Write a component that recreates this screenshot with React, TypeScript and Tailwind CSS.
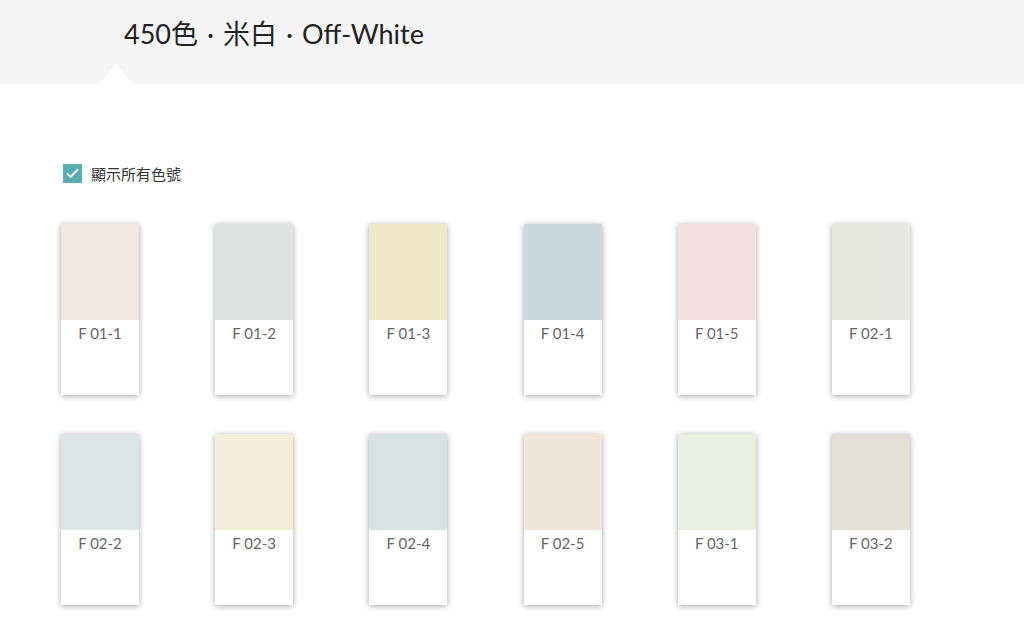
const swatches = [
  { code: "F 01-1", color: "bg-[#f2e7e5]" },
  { code: "F 01-2", color: "bg-[#e1e3e2]" },
  { code: "F 01-3", color: "bg-[#f1e8c9]" },
  { code: "F 01-4", color: "bg-[#cadadb]" },
  { code: "F 01-5", color: "bg-[#f2e0e3]" },
  { code: "F 02-1", color: "bg-[#e8e9e3]" },
  { code: "F 02-2", color: "bg-[#dde6e4]" },
  { code: "F 02-3", color: "bg-[#f1efdb]" },
  { code: "F 02-4", color: "bg-[#d6e3e1]" },
  { code: "F 02-5", color: "bg-[#f1e6dc]" },
  { code: "F 03-1", color: "bg-[#ebefe2]" },
  { code: "F 03-2", color: "bg-[#e2dfd6]" },
]

function Swatch({ code, color }: { code: string; color: string }) {
  return (
    <div className="w-[78px] h-[171px] bg-white shadow-[0_1px_6px_rgba(0,0,0,0.35)] flex flex-col">
      <div className={`h-[96px] ${color}`} />
      <p className="mt-[4px] text-center text-[15px] leading-[18px] text-[#666] font-['Lato',sans-serif]">
        {code}
      </p>
    </div>
  )
}

export default function App() {
  return (
    <div className="w-[1024px] h-[618px] bg-white overflow-hidden font-['Liberation_Sans',sans-serif]">
      <header className="relative h-[84px] bg-[#f5f5f5] pl-[124px] pt-[16px]">
        <h1 className="flex text-[27px] leading-[36px] text-[#222] font-['Lato','Noto_Sans_CJK_TC',sans-serif]">
          <span>450色</span>
          <span className="mx-[9px]">·</span>
          <span>米白</span>
          <span className="mx-[9px]">·</span>
          <span>Off-White</span>
        </h1>
        <div className="absolute left-[100px] bottom-0 w-0 h-0 border-l-[16px] border-r-[16px] border-b-[20px] border-l-transparent border-r-transparent border-b-white" />
      </header>

      <main className="pl-[61px]">
        <label className="mt-[80px] ml-[2px] h-[19px] flex items-center gap-[9px]">
          <span className="w-[19px] h-[19px] bg-[#5aaeb0] flex items-center justify-center">
            <svg width="15" height="15" viewBox="0 0 24 24" fill="none" stroke="white" strokeWidth="3" strokeLinecap="round" strokeLinejoin="round">
              <path d="M4 12.5l5 5L20 6" />
            </svg>
          </span>
          <span className="text-[15px] leading-[19px] text-[#333] font-['Noto_Sans_CJK_TC',sans-serif]">顯示所有色號</span>
        </label>

        <div className="mt-[41px] grid grid-cols-[repeat(6,78px)] gap-x-[76.2px] gap-y-[39px]">
          {swatches.map((s) => (
            <Swatch key={s.code} code={s.code} color={s.color} />
          ))}
        </div>
      </main>
    </div>
  )
}
